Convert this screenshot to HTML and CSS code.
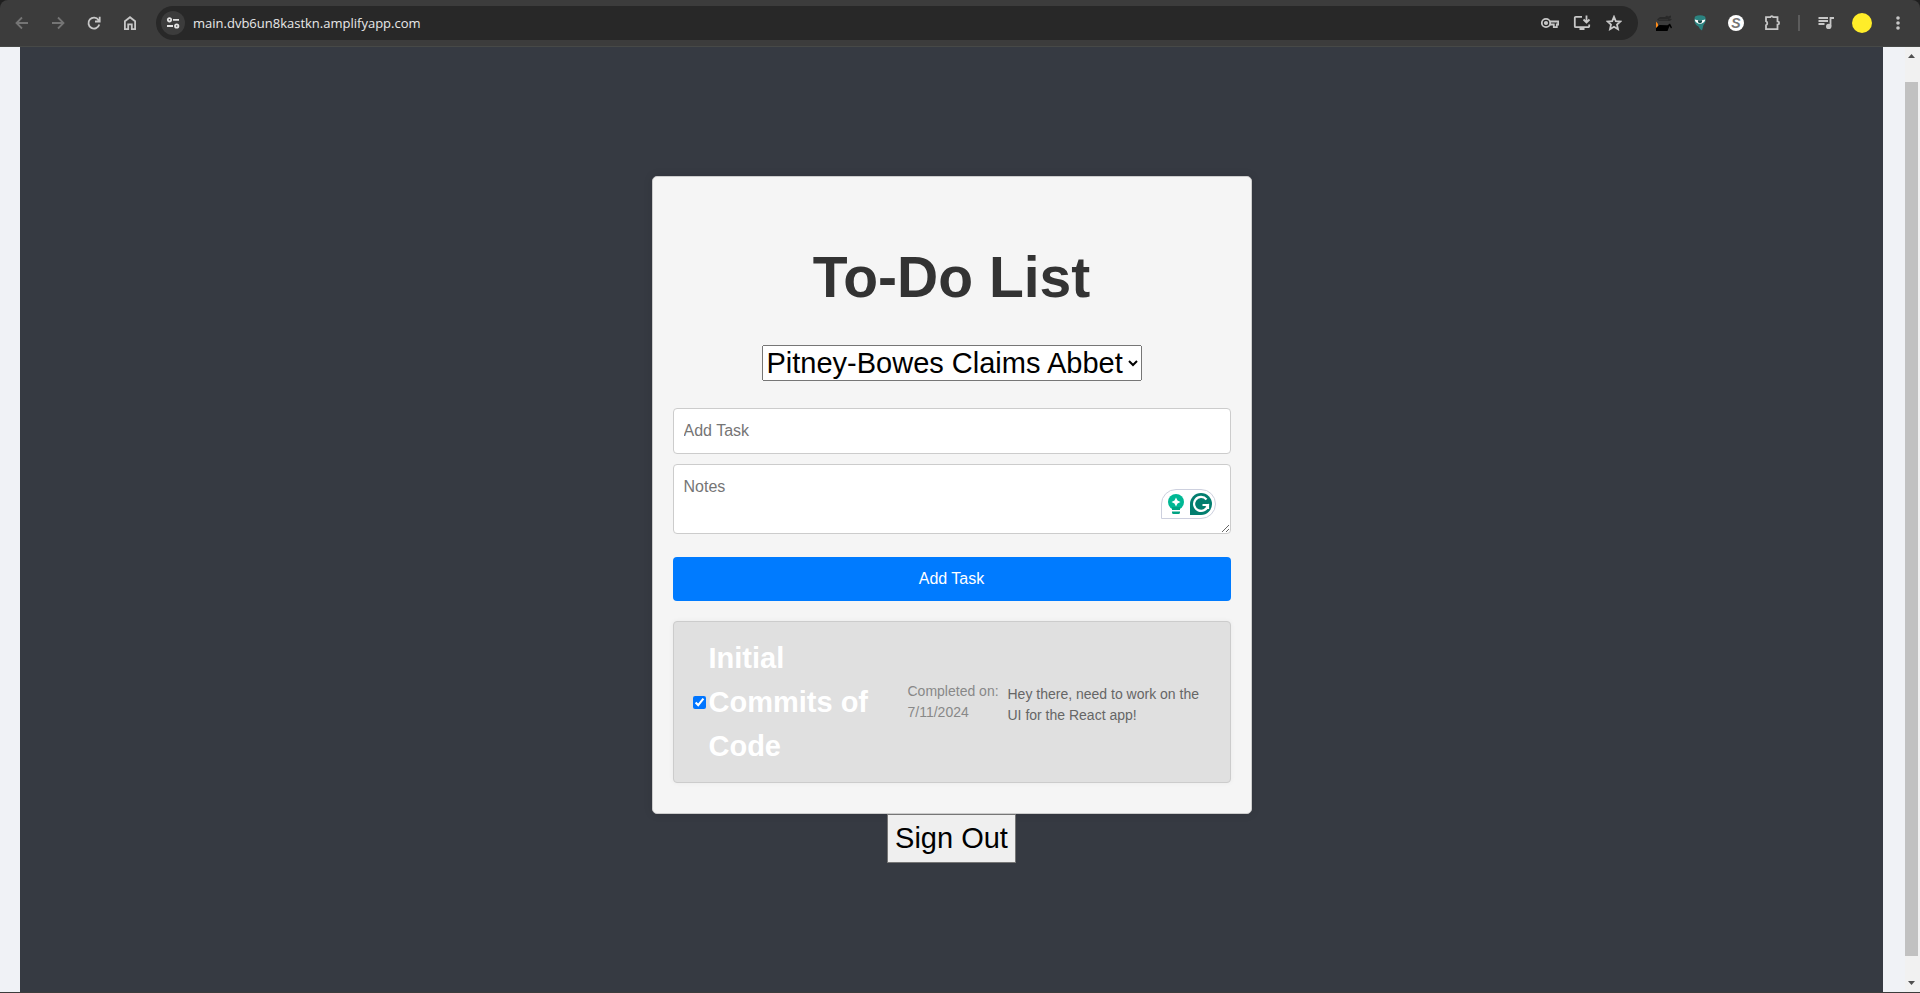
FILE: index.html
```html
<!DOCTYPE html>
<html lang="en">
<head>
<meta charset="utf-8">
<title>To-Do List</title>
<link rel="stylesheet" href="styles.css">
</head>
<body>
<div class="browser">
  <header class="toolbar">
    <button class="tool dim" aria-label="Back"><svg class="icon" viewBox="0 0 16 16"><path d="M14 8H3M8 2.500 2.500 8 8 13.500"/></svg></button>
    <button class="tool dim" aria-label="Forward"><svg class="icon" viewBox="0 0 16 16"><path d="M2 8H13M8 2.500 13.500 8 8 13.500"/></svg></button>
    <button class="tool" aria-label="Reload"><svg class="icon" viewBox="0 0 16 16"><path d="M13.300 9.500a5.500 5.500 0 1 1-.8-4.600L13.500 6M13.700 1.800v4.700H9"/></svg></button>
    <button class="tool" aria-label="Home"><svg class="icon" viewBox="0 0 16 16"><path d="M2.900 6.200 8 2.200l5.100 4v8H9.800V9.300H6.200v4.900H2.900z"/></svg></button>
    <div class="omnibox">
      <button class="site-info" aria-label="Site information"><svg class="icon" viewBox="0 0 16 16"><circle cx="4.500" cy="4.800" r="1.700"/><path d="M8 4.800H14M2 11h6"/><circle cx="11.700" cy="11" r="1.700"/></svg></button>
      <input class="url" type="text" aria-label="Address" value="main.dvb6un8kastkn.amplifyapp.com">
      <button class="action" aria-label="Passwords"><svg class="icon wide" viewBox="0 0 18 16"><circle cx="5" cy="8" r="4.200"/><circle cx="5" cy="8" r="1.200" fill="currentColor"/><path d="M9 6.500h8.200v3h-1.400v2.700h-3V9.500H9"/></svg></button>
      <button class="action" aria-label="Install app"><svg class="icon wide" viewBox="0 0 18 16"><path d="M9 1.800H2.800a1 1 0 0 0-1 1v8.400a1 1 0 0 0 1 1h12.400a1 1 0 0 0 1-1V9.500M13.500.5v6.500M10.500 4.500l3 3 3-3M6.500 14h5"/></svg></button>
      <button class="action" aria-label="Bookmark"><svg class="icon" viewBox="0 0 16 16"><path d="m8 1.800 1.800 4.300 4.700.4L11 9.600l1 4.600-4-2.400-4 2.400 1-4.600-3.500-3.100 4.700-.4z"/></svg></button>
    </div>
    <button class="tool" aria-label="Cat extension"><svg class="icon plain" viewBox="0 0 16 16"><path fill="#ff8b17" d="M0 6.500 2 9v2l-2 3z"/><path fill="#292929" d="M1 4.500 4 2h5l2-1.500 1 1 3-1v2l-2 1 3 .5-2 2H3z"/><path fill="#3c3c3c" d="M3 4.500h9v.7H3z"/><path fill="#000" d="m3.500 10 8 .3L14 8.500l2 4-1 1-1.500-2.500-2 5H0v-3z"/></svg></button>
    <button class="tool" aria-label="Owl extension"><svg class="icon plain" viewBox="0 0 16 16"><path fill="#2b8380" d="M3 1.500C6-.2 10-.2 13 1.500c1.300 3 .8 6-1.500 8.500L10 15.500 8 14l-1.500-2.500C3 10 1.500 6 3 1.500z"/><path fill="#fff" d="M2.800 4.500 6 5.200h4l3.200-.7C13 7 10.500 8.800 8 8.800S3 7 2.800 4.500z"/><path fill="#174c4b" d="M6 5.200h4v1.300a2 1.700 0 0 1-4 0z"/></svg></button>
    <button class="tool" aria-label="S extension"><span class="s-badge">S</span></button>
    <button class="tool" aria-label="Extensions"><svg class="icon wide" viewBox="0 0 18 16"><path d="M3 2.200h4.300a1.600 1.600 0 0 1 3 0h4.200v4.200a1.600 1.600 0 0 1 0 3.200v4.600H3v-4a2.200 2.200 0 0 0 0-4z"/></svg></button>
    <span class="divider"></span>
    <button class="tool" aria-label="Media"><svg class="icon wide" viewBox="0 0 18 16"><path d="M1.500 3h9.500M1.500 6h9.500M1.500 9h6M17 3h-3.500v8.500"/><circle cx="11.700" cy="11.400" r="1.800" fill="currentColor"/></svg></button>
    <button class="tool" aria-label="Profile"><span class="avatar"></span></button>
    <button class="tool" aria-label="Menu"><svg class="icon plain" viewBox="0 0 16 16"><circle cx="8" cy="3" r="1.800"/><circle cx="8" cy="8" r="1.800"/><circle cx="8" cy="13" r="1.800"/></svg></button>
  </header>

  <div class="viewport">
    <main class="app">
      <section class="card">
        <h1 class="title">To-Do List</h1>
        <select class="project" aria-label="Project"><option>Pitney-Bowes Claims Abbet</option></select>
        <form class="form">
          <input class="field" type="text" placeholder="Add Task" aria-label="Add Task">
          <div class="notes">
            <textarea class="field area" rows="2" placeholder="Notes" aria-label="Notes"></textarea>
            <div class="assistant">
              <svg class="bulb" viewBox="0 0 16 20"><circle cx="8" cy="8" r="8" fill="#00b894"/><path fill="#00a383" d="M4 13h8v3H4zM4 17.500h8v1a1.500 1.500 0 0 1-1.500 1.500h-5A1.500 1.500 0 0 1 4 18.500z"/><path fill="#fff" d="M8 3.500 9.500 6.500 12.500 8 9.500 9.500 8 12.500 6.500 9.500 3.500 8l3-1.500z"/></svg>
              <svg class="grammar" viewBox="0 0 22 22"><path fill="#027e6f" d="M11 0a11 11 0 1 1 0 22H0V11A11 11 0 0 1 11 0z"/><path fill="none" stroke="#fff" stroke-width="2.200" d="M16.500 6.500A7 7 0 1 0 18 12h-5.500M15.500 12.500l2.500-.5v4"/></svg>
            </div>
          </div>
          <button class="submit" type="button">Add Task</button>
        </form>
        <ul class="tasks">
          <li class="task">
            <input class="check" type="checkbox" id="task-1" checked>
            <label class="name" for="task-1">Initial Commits of Code</label>
            <span class="date">Completed on: 7/11/2024</span>
            <p class="note">Hey there, need to work on the UI for the React app!</p>
          </li>
        </ul>
      </section>
      <button class="sign-out">Sign Out</button>
    </main>
    <div class="scrollbar" aria-hidden="true">
      <svg class="arrow" viewBox="0 0 15 17"><path d="M3 11h7L6.500 7z"/></svg>
      <div class="track"><div class="thumb"></div></div>
      <svg class="arrow" viewBox="0 0 15 17"><path d="M3 6h7l-3.500 4z"/></svg>
    </div>
  </div>
</div>
</body>
</html>
```
FILE: styles.css
```css
* { box-sizing: border-box; }

body {
  margin: 0;
  font-family: "Liberation Sans", Arial, sans-serif;
  background: #1f1f1f;
}

.browser {
  display: flex;
  flex-direction: column;
  min-height: 100vh;
  border-bottom: 1px solid #3c3c3c;
}

/* Browser toolbar */
.toolbar {
  display: flex;
  align-items: center;
  height: 47px;
  padding: 0 4px;
  background: #3c3c3c;
  border-bottom: 1px solid #474947;
  border-radius: 8px 8px 0 0;
  color: #c7c7c7;
}

.toolbar button {
  display: flex;
  align-items: center;
  justify-content: center;
  padding: 0;
  border: 0;
  background: none;
  color: inherit;
}

.toolbar .tool { width: 36px; height: 36px; }
.toolbar .dim { color: #757575; }

.icon {
  width: 16px;
  height: 16px;
  fill: none;
  stroke: currentColor;
  stroke-width: 1.8;
}
.icon.wide { width: 18px; }
.icon.plain { fill: currentColor; stroke: none; }

.omnibox {
  display: flex;
  flex: 1;
  align-items: center;
  height: 34px;
  margin: 0 8px;
  padding: 0 8px 0 5px;
  border-radius: 17px;
  background: #282828;
}

.toolbar .site-info {
  width: 24px;
  height: 24px;
  border-radius: 50%;
  background: #3c3c3c;
  color: #e3e3e3;
}

.url {
  flex: 1;
  margin-left: 8px;
  padding: 0;
  border: 0;
  outline: 0;
  background: none;
  color: #e8e8e8;
  font: 13px/20px "Open Sans", sans-serif;
}

.toolbar .action { width: 32px; height: 32px; }

.s-badge {
  width: 16px;
  height: 16px;
  border-radius: 50%;
  background: #fff;
  color: #777;
  font: italic bold 14px/16px "Liberation Sans", sans-serif;
  text-align: center;
}

.divider {
  width: 2px;
  height: 16px;
  margin: 0 8px;
  background: #5c5c5c;
}

.avatar {
  width: 20px;
  height: 20px;
  border-radius: 50%;
  background: #ffed29;
}

/* Page */
.viewport {
  display: flex;
  flex: 1;
  background: #f0f2f6;
}

.app {
  display: flex;
  flex: 1;
  flex-direction: column;
  align-items: center;
  margin: 0 22px 0 20px;
  padding: 129px 0;
  background: #363a42;
}

.card {
  display: flex;
  flex-direction: column;
  align-items: center;
  width: 100%;
  max-width: 600px;
  padding: 20px 20px 30px;
  border: 1px solid #ccc;
  border-radius: 5px;
  background: #f5f5f5;
  box-shadow: 0 0 10px rgba(0, 0, 0, 0.1);
}

.title {
  margin: 37px 0 24px;
  color: #333;
  font-size: 57px;
  line-height: 87px;
}

.project {
  margin-bottom: 27px;
  color: #000;
  font-family: inherit;
  font-size: 29px;
}

.form {
  display: flex;
  flex-direction: column;
  gap: 10px;
  width: 100%;
}

.field {
  display: block;
  width: 100%;
  padding: 10px;
  border: 1px solid #ccc;
  border-radius: 4px;
  background: #fff;
  font: 16px/24px "Liberation Sans", Arial, sans-serif;
}
.field::placeholder { color: #757575; }

.notes { position: relative; }
.area { resize: vertical; }

.assistant {
  position: absolute;
  right: 15px;
  bottom: 15px;
  display: flex;
  align-items: center;
  justify-content: space-between;
  width: 55px;
  height: 30px;
  padding: 0 3px 0 6px;
  border: 1px solid #cdd0de;
  border-radius: 15px 15px 15px 0;
  background: #fff;
}
.bulb { width: 16px; height: 20px; }
.grammar { width: 22px; height: 22px; }

.submit {
  margin-top: 13px;
  padding: 10px;
  border: 0;
  border-radius: 4px;
  background: #007bff;
  color: #fff;
  font: 16px/24px "Liberation Sans", Arial, sans-serif;
}

.tasks {
  width: 100%;
  margin: 20px 0 0;
  padding: 0;
  list-style: none;
}

.task {
  display: flex;
  align-items: center;
  padding: 14px 15px;
  border: 1px solid #ccc;
  border-radius: 4px;
  background: #e0e0e0;
  box-shadow: 0 0 5px rgba(0, 0, 0, 0.05);
}

.check {
  flex: none;
  width: 13px;
  height: 13px;
  margin: 3px 3px 3px 4px;
  accent-color: #0075ff;
}

.name {
  flex: 0 0 189px;
  color: #fff;
  font-size: 29px;
  font-weight: bold;
  line-height: 44px;
}

.date {
  flex: 0 0 92px;
  margin: 0 8px 0 10px;
  color: #888;
  font-size: 14px;
  line-height: 21px;
}

.note {
  flex: 1;
  margin: 5px 0 0;
  color: #666;
  font-size: 14px;
  line-height: 21px;
}

.sign-out {
  padding: 7px;
  border: 1px solid #767676;
  background: #efefef;
  color: #000;
  font-family: inherit;
  font-size: 29px;
}

/* Scrollbar */
.scrollbar {
  display: flex;
  flex-direction: column;
  width: 15px;
  background: #f1f1f1;
}
.arrow { width: 15px; height: 17px; fill: #505050; }
.track { display: flex; flex: 1; padding: 18px 2px 19px 0; }
.thumb { flex: 1; background: #c1c1c1; }
```
